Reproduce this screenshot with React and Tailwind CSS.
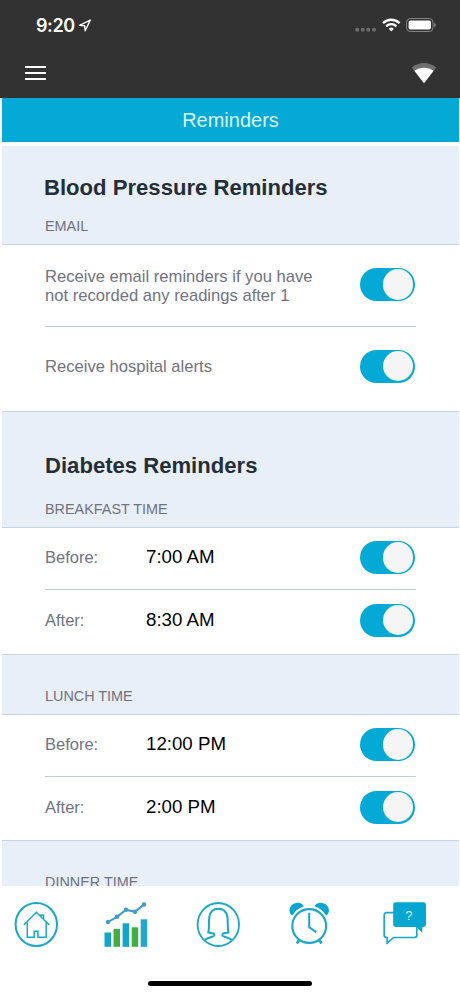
import { useState } from "react";

const mealTimes = [
  { id: "breakfast", title: "BREAKFAST TIME", before: "7:00 AM", after: "8:30 AM" },
  { id: "lunch", title: "LUNCH TIME", before: "12:00 PM", after: "2:00 PM" },
];

const StatusBar = () => (
  <div className="h-[50px] flex items-center justify-between pl-9 pr-6">
    <div className="flex items-center gap-[3px] pt-px">
      <span className="font-['Inter'] font-semibold text-[18px] leading-6 tracking-[-0.4px] text-white">
        9:20
      </span>
      <svg width="14" height="14" viewBox="0 0 14 14" fill="none">
        <path
          d="M1.6 6.3 12.3 1.1 7.2 11.8 6.6 6.8Z"
          stroke="#fff"
          strokeWidth="1.4"
          strokeLinejoin="round"
        />
      </svg>
    </div>
    <svg width="82" height="16" viewBox="0 0 82 16" className="block">
      <g fill="#6c6c6c">
        <circle cx="3.2" cy="12.7" r="2" />
        <circle cx="8.7" cy="12.7" r="2" />
        <circle cx="14.3" cy="12.7" r="2" />
        <circle cx="20" cy="12.7" r="2" />
      </g>
      <g fill="none" stroke="#fff" strokeWidth="2.3">
        <path d="M29 6.1a12 12 0 0 1 16.6 0" />
        <path d="M32.1 9.3a7.5 7.5 0 0 1 10.4 0" />
      </g>
      <path d="M34.8 11.7a3.8 3.8 0 0 1 5 0L37.3 14.4Z" fill="#fff" />
      <rect x="52.5" y="1.5" width="26.5" height="13" rx="3.8" fill="none" stroke="#858585" />
      <rect x="54.6" y="3.5" width="22.4" height="9" rx="1.9" fill="#fff" />
      <path d="M80.2 6v4.4c1-.3 1.5-1.2 1.5-2.2s-.5-1.9-1.5-2.2Z" fill="#858585" />
    </svg>
  </div>
);

const Toolbar = () => (
  <div className="h-12 flex items-center justify-between pl-[25px] pr-[23px] pb-[2px]">
    <button className="flex flex-col gap-[4px]" aria-label="Menu">
      <span className="block w-[21px] h-[2px] bg-white" />
      <span className="block w-[21px] h-[2px] bg-white" />
      <span className="block w-[21px] h-[2px] bg-white" />
    </button>
    <svg width="26" height="22" viewBox="0 0 26 22">
      <path d="M0.7 5.4C8 -.6 18 -.6 25.3 5.4L13 21.2Z" fill="#707070" />
      <path d="M3.4 8.8C9 4.6 17 4.6 22.6 8.8L13 21.2Z" fill="#fff" />
    </svg>
  </div>
);

const Toggle = ({ label }) => {
  const [on, setOn] = useState(true);

  return (
    <button
      role="switch"
      aria-checked={on}
      aria-label={label}
      onClick={() => setOn((prev) => !prev)}
      className={`w-[55px] h-[33px] shrink-0 rounded-full flex items-center p-[1.3px] ${
        on ? "bg-[#04a9d5] justify-end" : "bg-gray-300 justify-start"
      }`}
    >
      <span className="w-[30.4px] h-[30.4px] rounded-full bg-[#f5f5f6]" />
    </button>
  );
};

const SectionTitle = ({ children }) => (
  <p className="text-[14.4px] leading-[18px] text-[#70727f]">{children}</p>
);

const TimeRow = ({ label, time }) => (
  <div className="flex-1 flex items-center pr-[1.5px] pb-[2px]">
    <span className="w-[101px] text-[16.5px] text-[#71737f]">{label}</span>
    <span className="flex-1 text-[18.7px] text-black">{time}</span>
    <Toggle label={`${label} ${time}`} />
  </div>
);

const MealRows = ({ meal }) => (
  <div className="pl-[43px] pr-[43px] flex flex-col">
    <div className="h-[62px] flex border-b border-[#bccfd8]">
      <TimeRow label="Before:" time={meal.before} />
    </div>
    <div className="h-[62px] flex">
      <TimeRow label="After:" time={meal.after} />
    </div>
  </div>
);

const HomeIcon = () => (
  <svg width="46" height="48" viewBox="0 0 46 48" fill="none" stroke="#1ba6cb">
    <ellipse cx="23.3" cy="24.5" rx="20.7" ry="21.5" strokeWidth="2" />
    <path
      d="M10.8 25 23.3 12.2 36.3 25M28 16.7V15H30.5V19.4M14.3 22.5V37.2H21.2V31.3H25V37.2H33.2V22.5"
      strokeWidth="1.5"
    />
  </svg>
);

const ChartIcon = () => (
  <svg width="46" height="48" viewBox="0 0 46 48">
    <g fill="#12a5cc">
      <rect x="1.5" y="32.5" width="6.5" height="14.3" />
      <rect x="19.6" y="23.3" width="6.5" height="23.5" />
      <rect x="37.7" y="19.3" width="6.5" height="27.5" fill="#24a9cd" />
    </g>
    <g fill="#43ad42">
      <rect x="10.5" y="28.8" width="6.5" height="18" />
      <rect x="28.7" y="27.3" width="6.5" height="19.5" />
    </g>
    <path d="M5 22 14 16.8 23 9.8 32 11.8 41 4.5" fill="none" stroke="#4098cf" strokeWidth="2" />
    <g fill="#3c9dd3">
      <circle cx="5" cy="22" r="2.2" />
      <circle cx="14" cy="16.8" r="2.2" />
      <circle cx="23" cy="9.8" r="2.2" />
      <circle cx="32" cy="11.8" r="2.2" />
      <circle cx="41" cy="4.5" r="2.2" />
    </g>
  </svg>
);

const ProfileIcon = () => (
  <svg width="46" height="48" viewBox="0 0 46 48" fill="none" stroke="#1ba6cb">
    <ellipse cx="23.3" cy="24.5" rx="20.7" ry="21.5" strokeWidth="1.8" />
    <path
      d="M10 39.8C12.5 37.4 18.8 37 19.2 35.5C19.4 34 18.8 33.3 17.5 33.2L13.2 32.4C14.5 30 13.4 22 14.4 16.5C15.5 10.7 19 8.7 23.3 8.7S31.2 10.7 32.3 16.5C33.3 22 32.2 30 33.6 32.4L29 33.2C27.8 33.3 27.2 34 27.4 35.5C27.8 37 34 37.4 36.6 39.8"
      strokeWidth="2"
      strokeLinejoin="round"
    />
  </svg>
);

const AlarmIcon = () => (
  <svg width="46" height="48" viewBox="0 0 46 48" fill="none" stroke="#1ba6cb">
    <g fill="#05a6cf" stroke="none">
      <path d="M6.3 15.6C2.7 13.5 2.7 8.5 5.5 5.5C9 1.5 15.8 1.6 17.9 6.3A20.8 20.8 0 0 0 6.3 15.6Z" />
      <path d="M40.1 15.6C43.7 13.5 43.7 8.5 40.9 5.5C37.4 1.5 30.6 1.6 28.5 6.3A20.8 20.8 0 0 1 40.1 15.6Z" />
    </g>
    <circle cx="23.2" cy="26" r="16.9" strokeWidth="2.1" />
    <path d="M23.2 12.8V27.3L30.3 32.1" strokeWidth="2" />
    <path d="M13 40 10.9 43.5M33.4 40 35.5 43.5" strokeWidth="2.6" />
  </svg>
);

const HelpIcon = () => (
  <svg width="46" height="48" viewBox="0 0 46 48">
    <path
      d="M12 12.7H4.5C3 12.7 2.2 13.6 2.2 15V35.5C2.2 37 3 37.5 5.2 37.5V43.4L11.5 37.5H32C34 37.5 34.8 37 34.8 35.5V26"
      fill="none"
      stroke="#1ba6cb"
      strokeWidth="1.7"
      strokeLinejoin="round"
    />
    <path
      d="M13.4 2.3H41.6Q44 2.3 44 4.7V24.6Q44 27 41.6 27H40.3V32.8L34.5 27H13.4Q11.2 27 11.2 24.6V4.7Q11.2 2.3 13.4 2.3Z"
      fill="#05a6cf"
    />
    <text x="26.8" y="20" textAnchor="middle" fontSize="13" fill="#d8f7ff">
      ?
    </text>
  </svg>
);

const BottomNav = () => (
  <nav className="h-[110px] shrink-0 bg-white flex flex-col">
    <div className="h-[95px] pt-[14px] pl-[13px] flex items-start">
      <button className="mr-[44px]" aria-label="Home"><HomeIcon /></button>
      <button className="mr-[46px]" aria-label="Charts"><ChartIcon /></button>
      <button className="mr-[44.5px]" aria-label="Profile"><ProfileIcon /></button>
      <button className="mr-[50.5px]" aria-label="Reminders"><AlarmIcon /></button>
      <button aria-label="Help"><HelpIcon /></button>
    </div>
    <div className="w-[164px] h-[5px] rounded-full bg-black mx-auto" />
  </nav>
);

const App = () => (
  <div className="w-[460px] h-[996px] overflow-hidden flex flex-col bg-white font-['Liberation_Sans',Arial,sans-serif]">
    <header className="h-[98px] shrink-0 bg-[#323232]">
      <StatusBar />
      <Toolbar />
    </header>

    <main className="h-[788px] shrink-0 overflow-hidden ml-[2px] mr-px">
      <h1 className="h-[44px] flex items-center justify-center bg-[#04a9d5] text-[20px] text-[#dcfaff]">
        Reminders
      </h1>

      <section className="mt-1">
        <div className="h-[99px] pt-[29px] pl-[42px] bg-[#e9eff8] border-b border-[#c5d4e0]">
          <h2 className="text-[22.1px] leading-[26px] font-bold text-[#242e38]">
            Blood Pressure Reminders
          </h2>
          <div className="pt-[16px] pl-px">
            <SectionTitle>EMAIL</SectionTitle>
          </div>
        </div>
        <div className="pl-[43px] pr-[43px]">
          <div className="h-[82px] pr-[1.5px] flex items-center justify-between border-b border-[#bccfd8]">
            <p className="w-[290px] text-[16.6px] leading-[19px] text-[#71737f]">
              Receive email reminders if you have
              <br />
              not recorded any readings after 1
            </p>
            <div className="pb-[2px] flex">
              <Toggle label="Email reminders" />
            </div>
          </div>
          <div className="h-[84px] pr-[1.5px] pb-[4px] flex items-center justify-between">
            <p className="text-[16.6px] text-[#71737f]">Receive hospital alerts</p>
            <div className="pb-[2px] flex">
              <Toggle label="Hospital alerts" />
            </div>
          </div>
        </div>
      </section>

      <section>
        <div className="h-[117px] pt-[41px] pl-[43px] bg-[#e9eff8] border-y border-[#c5d4e0]">
          <h2 className="text-[22.1px] leading-[26px] font-bold text-[#242e38]">
            Diabetes Reminders
          </h2>
          <div className="pt-[21px]">
            <SectionTitle>{mealTimes[0].title}</SectionTitle>
          </div>
        </div>
        <div className="h-[126px]">
          <MealRows meal={mealTimes[0]} />
        </div>
        <div className="h-[61px] pt-[32px] pl-[43px] bg-[#e9eff8] border-y border-[#c5d4e0]">
          <SectionTitle>{mealTimes[1].title}</SectionTitle>
        </div>
        <div className="h-[125px]">
          <MealRows meal={mealTimes[1]} />
        </div>
        <div className="h-[61px] pt-[32px] pl-[43px] bg-[#e9eff8] border-t border-[#c5d4e0]">
          <SectionTitle>DINNER TIME</SectionTitle>
        </div>
      </section>
    </main>

    <BottomNav />
  </div>
);

export default App;
